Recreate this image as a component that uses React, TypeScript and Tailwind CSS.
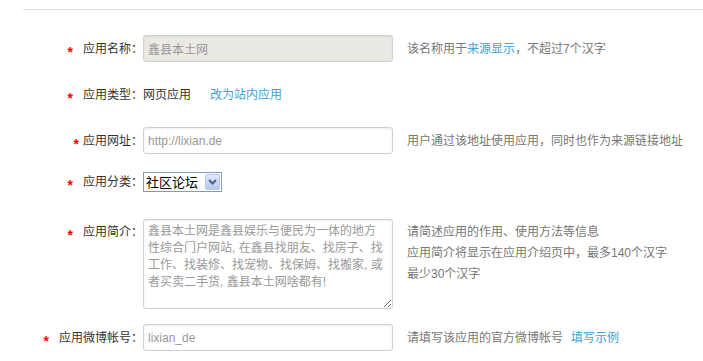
import React from "react";

const Star = ({ gap }: { gap: string }) => (
  <span className={`text-[14px] font-bold leading-none text-[#ff0000] translate-y-[3px] ${gap}`}>*</span>
);

const inputCls =
  "h-[27px] w-[250px] rounded-[3px] border border-[#cfcfcf] px-[4px] text-[12px] text-[#999] outline-none shadow-[inset_0_1px_2px_rgba(0,0,0,0.08)]";

export default function App() {
  return (
    <div className="min-h-[361px] w-[703px] bg-white text-[12px] text-[#333] font-['Liberation_Sans','Noto_Sans_CJK_SC',sans-serif]">
      <div className="ml-[23px] mt-[9px] border-t border-[#dddddd]" />

      {/* Row 1 */}
      <div className="mt-[25px] flex items-center">
        <div className="flex w-[143px] items-center justify-end">
          <Star gap="mr-[10px]" />
          <span>应用名称：</span>
        </div>
        <input readOnly value="鑫县本土网" className={`${inputCls} bg-[#ebe9e4]`} />
        <span className="ml-[14px] text-[#777]">
          该名称用于<span className="text-[#3fa2d4]">来源显示</span>，不超过7个汉字
        </span>
      </div>

      {/* Row 2 */}
      <div className="mt-[23px] flex h-[20px] items-center">
        <div className="flex w-[143px] items-center justify-end">
          <Star gap="mr-[10px]" />
          <span>应用类型：</span>
        </div>
        <span>网页应用</span>
        <span className="ml-[19px] text-[#3fa2d4]">改为站内应用</span>
      </div>

      {/* Row 3 */}
      <div className="mt-[22px] flex items-center">
        <div className="flex w-[143px] items-center justify-end">
          <Star gap="mr-[4px]" />
          <span>应用网址：</span>
        </div>
        <input readOnly value="http://lixian.de" className={`${inputCls} bg-white`} />
        <span className="ml-[14px] text-[#777]">用户通过该地址使用应用，同时也作为来源链接地址</span>
      </div>

      {/* Row 4 */}
      <div className="mt-[18px] flex items-center">
        <div className="flex w-[143px] items-center justify-end">
          <Star gap="mr-[10px]" />
          <span>应用分类：</span>
        </div>
        <div className="flex h-[20px] w-[79px] items-center justify-between border border-[#7f9db9] bg-white pl-[2px] pr-[1px]">
          <span className="text-[13px] leading-none text-black">社区论坛</span>
          <span className="flex h-[16px] w-[15px] items-center justify-center rounded-[2px] border border-[#b3c6ef] bg-gradient-to-b from-[#dfe8fe] to-[#b6c9f5]">
            <svg width="9" height="6" viewBox="0 0 9 6">
              <polyline points="1,1 4.5,4.5 8,1" fill="none" stroke="#4d6185" strokeWidth="2" />
            </svg>
          </span>
        </div>
      </div>

      {/* Row 5 */}
      <div className="mt-[27px] flex items-start">
        <div className="mt-[3px] flex h-[20px] w-[143px] items-center justify-end">
          <Star gap="mr-[10px]" />
          <span>应用简介：</span>
        </div>
        <textarea
          readOnly
          value={"鑫县本土网是鑫县娱乐与便民为一体的地方\n性综合门户网站, 在鑫县找朋友、找房子、找\n工作、找装修、找宠物、找保姆、找搬家, 或\n者买卖二手货, 鑫县本土网啥都有!"}
          className="h-[90px] w-[250px] rounded-[3px] border border-[#cfcfcf] bg-white px-[4px] pt-[3px] text-[12px] leading-[17px] text-[#999] outline-none shadow-[inset_0_1px_2px_rgba(0,0,0,0.08)]"
        />
        <div className="ml-[14px] mt-[3px] flex flex-col leading-[21px] text-[#777]">
          <span>请简述应用的作用、使用方法等信息</span>
          <span>应用简介将显示在应用介绍页中，最多140个汉字</span>
          <span>最少30个汉字</span>
        </div>
      </div>

      {/* Row 6 */}
      <div className="mt-[15px] flex items-center">
        <div className="flex w-[143px] items-center justify-end">
          <Star gap="mr-[10px]" />
          <span>应用微博帐号：</span>
        </div>
        <input readOnly value="lixian_de" className={`${inputCls} bg-white`} />
        <span className="ml-[14px] text-[#777]">请填写该应用的官方微博帐号</span>
        <span className="ml-[8px] text-[#3fa2d4]">填写示例</span>
      </div>
    </div>
  );
}
